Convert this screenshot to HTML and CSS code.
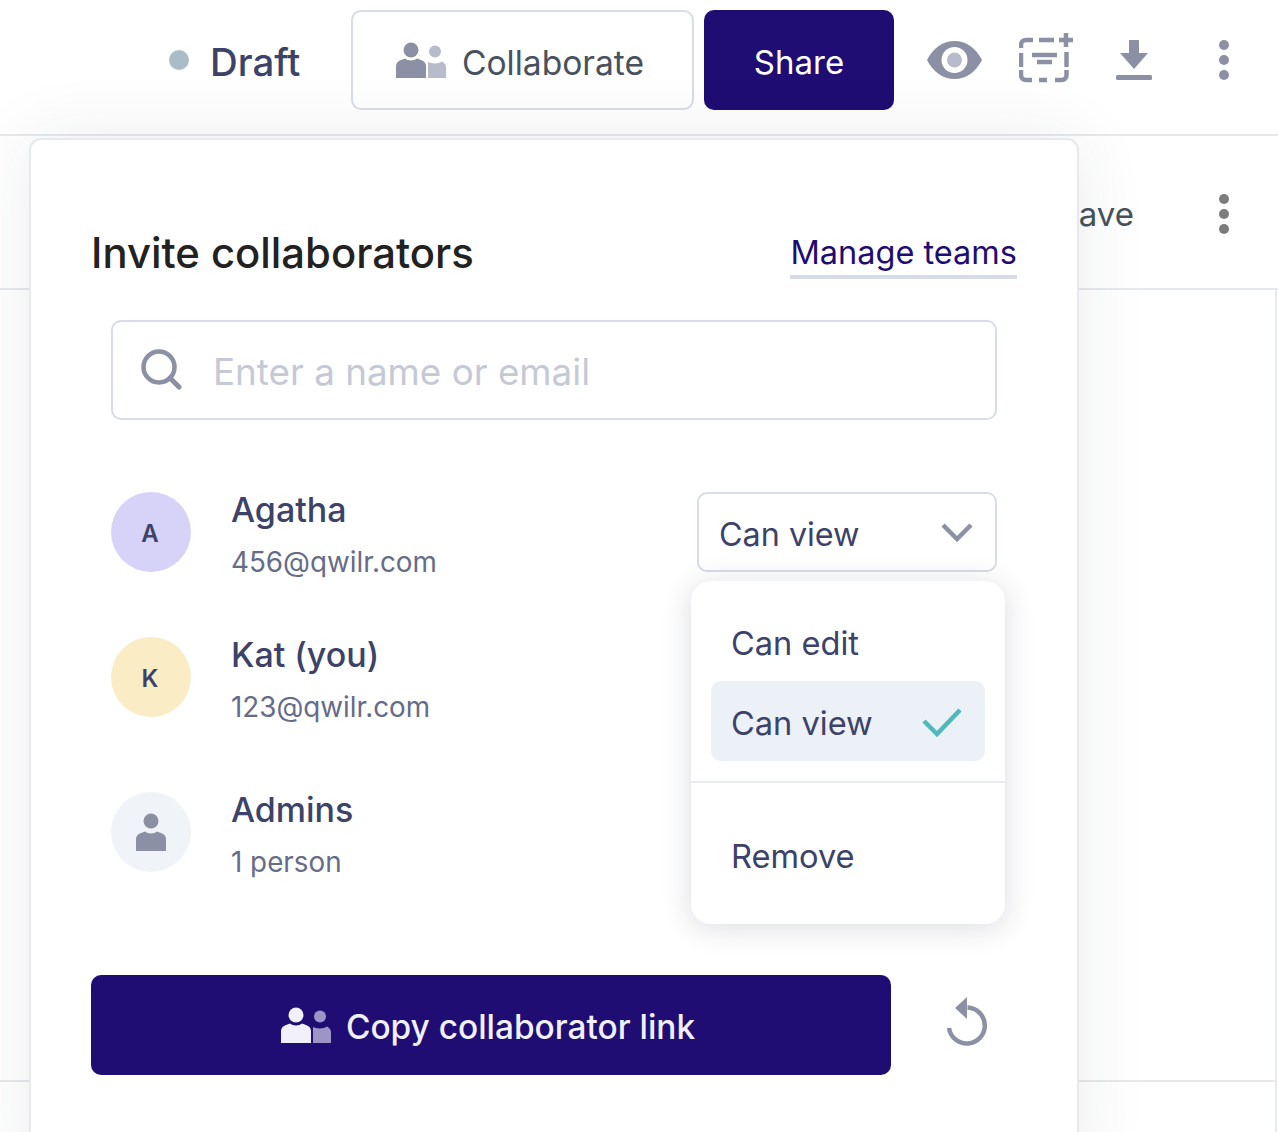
FILE: index.html
```html
<!DOCTYPE html>
<html lang="en">
<head>
    <meta charset="UTF-8">
    <title>Invite collaborators</title>
    <link rel="stylesheet" href="styles.css">
</head>
<body>
    <header class="topbar">
        <div class="status">
            <span class="status-dot"></span>
            <span class="status-text">Draft</span>
        </div>
        <button class="btn-collaborate">
            <svg class="people" width="50" height="38" viewBox="0 0 50 38">
                <circle class="fill-dark" cx="15" cy="10" r="7.5"/>
                <path class="fill-dark" d="M0 38V26c0-3 2-5 5-6l4-1.500c3 2.500 9 2.500 12 0l4 1.500c3 1 5 3 5 6v12z"/>
                <circle class="fill-light" cx="39" cy="11.500" r="6"/>
                <path class="fill-light" d="M32 38V22c3 2 11 2 14-.5 2 1 4 3 4 5.500v11z"/>
            </svg>
            Collaborate
        </button>
        <button class="btn-share">Share</button>
        <div class="tools">
            <svg width="55" height="38" viewBox="0 0 55 38">
                <path class="fill-dark" d="M0 19C6 7 16 0 27.500 0S49 7 55 19C49 31 39 38 27.500 38S6 31 0 19z"/>
                <circle cx="27.500" cy="19" r="13" fill="#fff"/>
                <circle class="fill-light" cx="27.500" cy="19" r="7.500"/>
            </svg>
            <svg class="tool-filter" width="56" height="52" viewBox="0 0 56 52">
                <g class="line-dark" fill="none" stroke-width="4.500">
                    <path d="M2 15v-3c0-3 2-5 5-5h7M20 7h15M2 20v14M2 37v5c0 3 2 5 5 5h6M20 47h8M36 47h6.500c3 0 5-2 5-5v-5M47.500 19v15"/>
                    <path d="M13 22h25M18 29h15"/>
                    <path d="M40 7h14M47 0v14"/>
                </g>
            </svg>
            <svg class="tool-download" width="36" height="40" viewBox="0 0 36 40">
                <path class="fill-dark" d="M13 0h10v13h9L18 29 4 13h9z"/>
                <rect class="fill-dark" y="35" width="36" height="5" rx="1.500"/>
            </svg>
            <span class="dots"><i></i><i></i><i></i></span>
        </div>
    </header>

    <div class="subbar">
        <span class="subbar-save">Save</span>
        <span class="dots dots-grey"><i></i><i></i><i></i></span>
    </div>

    <main class="content"></main>
    <div class="content-end"></div>

    <section class="popover">
        <div class="popover-head">
            <h2>Invite collaborators</h2>
            <a class="manage-link" href="#">Manage teams</a>
        </div>

        <label class="search">
            <svg width="42" height="42" viewBox="0 0 42 42" fill="none">
                <circle class="line-dark" cx="19" cy="18" r="15.500" stroke-width="4.500"/>
                <path class="line-dark" d="M30 29l9 9" stroke-width="5" stroke-linecap="round"/>
            </svg>
            <input type="text" placeholder="Enter a name or email">
        </label>

        <div class="person">
            <div class="avatar avatar-purple">A</div>
            <div class="person-info">
                <div class="person-name">Agatha</div>
                <div class="person-sub">456@qwilr.com</div>
            </div>
            <div class="role-select">
                <span>Can view</span>
                <svg width="32" height="20" viewBox="0 0 32 20" fill="none">
                    <path class="line-dark" d="M2 3l14 14L30 3" stroke-width="4.500"/>
                </svg>
            </div>
        </div>

        <div class="person person-kat">
            <div class="avatar avatar-yellow">K</div>
            <div class="person-info">
                <div class="person-name">Kat (you)</div>
                <div class="person-sub">123@qwilr.com</div>
            </div>
        </div>

        <div class="person person-admins">
            <div class="avatar avatar-grey">
                <svg width="30" height="38" viewBox="0 0 30 38">
                    <circle class="fill-dark" cx="15" cy="8" r="7.500"/>
                    <path class="fill-dark" d="M0 38V26c0-3 2-5 5-6l4-1.500c3 2.500 9 2.500 12 0l4 1.500c3 1 5 3 5 6v12z"/>
                </svg>
            </div>
            <div class="person-info">
                <div class="person-name">Admins</div>
                <div class="person-sub">1 person</div>
            </div>
        </div>

        <div class="popover-foot">
            <button class="btn-copy">
                <svg width="50" height="38" viewBox="0 0 50 38">
                    <circle fill="#f1f0fb" cx="15" cy="10" r="7.500"/>
                    <path fill="#f1f0fb" d="M0 38V26c0-3 2-5 5-6l4-1.500c3 2.500 9 2.500 12 0l4 1.500c3 1 5 3 5 6v12z"/>
                    <circle fill="#9d95c6" cx="39" cy="11.500" r="6"/>
                    <path fill="#9d95c6" d="M32 38V22c3 2 11 2 14-.5 2 1 4 3 4 5.500v11z"/>
                </svg>
                Copy collaborator link
            </button>
            <svg class="reset" width="42" height="50" viewBox="0 0 42 50" fill="none">
                <path class="line-dark" d="M3 31a18 18 0 1 0 18.500-20.500" stroke-width="4.500"/>
                <path class="fill-dark" d="M9 11L21 0v22z"/>
            </svg>
        </div>

        <div class="role-menu">
            <div class="role-option">Can edit</div>
            <div class="role-option role-option-active">
                <span>Can view</span>
                <svg width="40" height="30" viewBox="0 0 40 30" fill="none">
                    <path d="M2 14l13 13L38 3" stroke="#4fb8bb" stroke-width="4.500"/>
                </svg>
            </div>
            <div class="role-divider"></div>
            <div class="role-option role-option-remove">Remove</div>
        </div>
    </section>
</body>
</html>
```

FILE: styles.css
```css
* {
    box-sizing: border-box;
}

html, body {
    margin: 0;
    height: 1132px;
    overflow: hidden;
}

body {
    position: relative;
    font-family: 'Inter', sans-serif;
    background-color: #fff;
    color: #3c4268;
}

button {
    font-family: inherit;
    cursor: pointer;
}

.fill-dark {
    fill: #8b90a5;
}

.fill-light {
    fill: #b8bcca;
}

.line-dark {
    stroke: #8b90a5;
}

/* Top bar */
.topbar {
    height: 136px;
    border-bottom: 2px solid #e6e9ee;
    padding: 10px 0 0 169px;
    display: flex;
    align-items: flex-start;
}

.status {
    width: 182px;
    height: 100px;
    padding-top: 4px;
    display: flex;
    align-items: center;
}

.status-dot {
    width: 20px;
    height: 20px;
    border-radius: 50%;
    background-color: #a9bcc8;
    margin-right: 21px;
    margin-bottom: 4px;
}

.status-text {
    font-size: 38.4px;
    font-weight: 500;
}

.btn-collaborate {
    width: 343px;
    height: 100px;
    border: 2px solid #d8dce8;
    border-radius: 10px;
    background-color: #fff;
    color: #47525d;
    font-size: 33.6px;
    font-weight: 400;
    display: flex;
    align-items: center;
    justify-content: center;
    gap: 16px;
    padding: 4px 5px 0 0;
}

.btn-collaborate svg {
    margin-bottom: 6px;
}

.btn-share {
    width: 190px;
    height: 100px;
    margin-left: 10px;
    border: none;
    border-radius: 10px;
    background-color: #1f0d73;
    color: #fff;
    font-size: 33px;
    font-weight: 400;
    padding: 4px 0 0;
}

.tools {
    height: 100px;
    margin-left: 33px;
    display: flex;
    align-items: center;
}

.tool-filter {
    margin-left: 37px;
    margin-top: -2px;
}

.tool-download {
    margin-left: 41px;
}

.dots {
    display: flex;
    flex-direction: column;
    gap: 5px;
    margin-left: 67px;
}

.dots i {
    display: block;
    width: 10px;
    height: 10px;
    border-radius: 50%;
    background-color: #8b90a5;
}

.dots-grey {
    margin-left: 85px;
}

.dots-grey i {
    background-color: #7c7c7c;
}

/* Row behind the popover */
.subbar {
    height: 154px;
    border-bottom: 2px solid #e6e9ee;
    display: flex;
    align-items: center;
    justify-content: flex-end;
    padding: 4px 49px 0 0;
}

.subbar-save {
    font-size: 33px;
    color: #47525d;
}

.content {
    height: 790px;
    border-right: 2px solid #e6e9ee;
    margin-right: 1px;
}

.content-end {
    border-top: 2px solid #e6e9ee;
    height: 52px;
    border-right: 2px solid #e6e9ee;
    margin-right: 1px;
}

/* Popover */
.popover {
    position: absolute;
    left: 29px;
    top: 138px;
    width: 1050px;
    height: 1040px;
    padding: 88px 60px 0;
    background-color: #fff;
    border: 2px solid #e6e9ee;
    border-radius: 12px;
    box-shadow: 0 0 70px rgba(30, 40, 60, 0.09);
}

.popover-head {
    display: flex;
    justify-content: space-between;
    align-items: center;
    height: 50px;
}

.popover-head h2 {
    margin: 0;
    font-size: 41.8px;
    font-weight: 500;
    color: #222;
}

.manage-link {
    color: #1f0d73;
    font-size: 32.5px;
    text-decoration: none;
    border-bottom: 4px solid #d8dce8;
    line-height: 44px;
    margin-top: 4px;
}

.search {
    display: flex;
    align-items: center;
    height: 100px;
    margin: 42px 20px 0;
    padding: 0 0 0 27px;
    border: 2px solid #d8dce8;
    border-radius: 10px;
}

.search input {
    flex: 1;
    min-width: 0;
    margin-left: 31px;
    border: none;
    outline: none;
    padding: 2px 0 0;
    font-family: inherit;
    font-size: 36.8px;
    color: #3c4268;
}

.search input::placeholder {
    color: #c5c9d6;
    opacity: 1;
}

.person {
    display: flex;
    align-items: center;
    height: 80px;
    margin: 72px 20px 0;
}

.person-kat {
    margin-top: 65px;
}

.person-admins {
    margin-top: 75px;
}

.avatar {
    width: 80px;
    height: 80px;
    border-radius: 50%;
    flex-shrink: 0;
    display: flex;
    align-items: center;
    justify-content: center;
    font-size: 24px;
    font-weight: 600;
    padding: 2px 2px 0 0;
}

.avatar-purple {
    background-color: #d7d2f8;
}

.avatar-yellow {
    background-color: #faecc4;
}

.avatar-grey {
    background-color: #f0f3f8;
    padding: 0;
}

.person-info {
    margin-left: 40px;
    flex: 1;
}

.person-name {
    font-size: 34px;
    font-weight: 500;
    line-height: 44px;
    margin-top: 6px;
}

.person-sub {
    font-size: 27.8px;
    line-height: 40px;
    margin-top: 10px;
    color: #666c88;
}

.role-select {
    width: 300px;
    height: 80px;
    display: flex;
    align-items: center;
    justify-content: space-between;
    padding: 0 22px 0 20px;
    border: 2px solid #d8dce8;
    border-radius: 10px;
    font-size: 32.3px;
}

.role-select span {
    padding-top: 4px;
}

.popover-foot {
    display: flex;
    align-items: center;
    margin-top: 103px;
}

.btn-copy {
    width: 800px;
    height: 100px;
    border: none;
    border-radius: 10px;
    background-color: #1f0d73;
    color: #f1f0fb;
    font-size: 33.4px;
    font-weight: 500;
    display: flex;
    align-items: center;
    justify-content: center;
    gap: 15px;
    padding: 4px 6px 0 0;
}

.btn-copy svg {
    margin-bottom: 6px;
}

.reset {
    margin-left: 55px;
    margin-top: -6px;
}

/* Role dropdown */
.role-menu {
    position: absolute;
    left: 660px;
    top: 441px;
    width: 314px;
    height: 343px;
    padding-top: 20px;
    background-color: #fff;
    border-radius: 20px;
    box-shadow: 0 4px 30px rgba(30, 40, 60, 0.16);
}

.role-option {
    display: flex;
    align-items: center;
    justify-content: space-between;
    height: 80px;
    margin: 0 20px;
    padding: 4px 23px 0 20px;
    border-radius: 10px;
    font-size: 32.6px;
}

.role-option svg {
    margin-bottom: 2px;
}

.role-option-active {
    background-color: #ecf0f7;
}

.role-divider {
    height: 2px;
    margin-top: 20px;
    background-color: #e8ecf2;
}

.role-option-remove {
    margin-top: 31px;
}
```
